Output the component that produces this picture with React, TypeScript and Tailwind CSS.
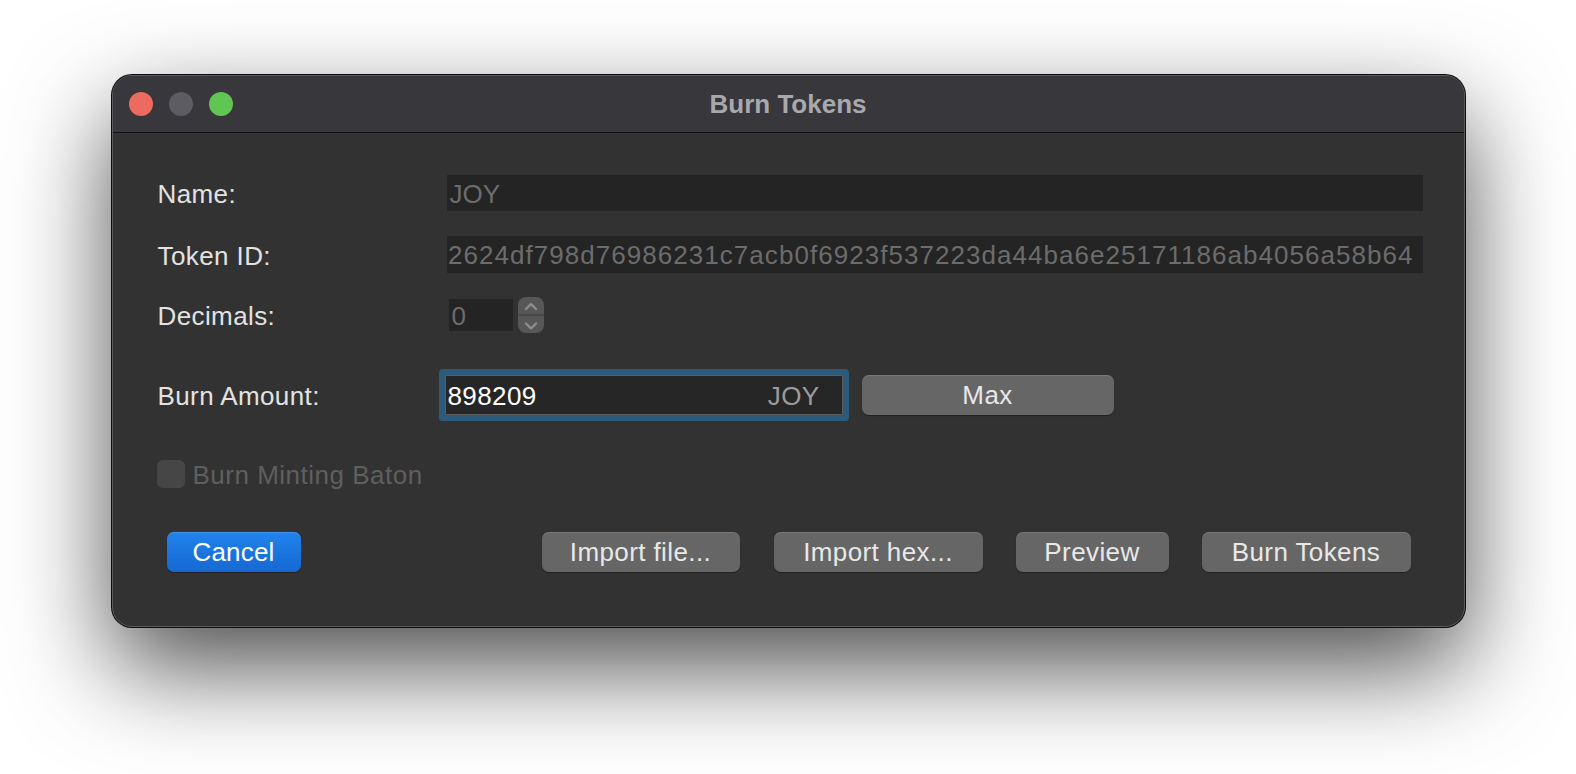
import React from "react";

const font = { fontFamily: '"Liberation Sans", Arial, sans-serif' };

function TrafficLights() {
  return (
    <div className="flex items-center gap-[16px] pl-[16px]">
      <span className="block w-[24px] h-[24px] rounded-full bg-[#ec6a5f]" />
      <span className="block w-[24px] h-[24px] rounded-full bg-[#5d5c62]" />
      <span className="block w-[24px] h-[24px] rounded-full bg-[#61c554]" />
    </div>
  );
}

function Stepper() {
  return (
    <div className="w-[26px] h-[36px] rounded-[8px] bg-[#575757] ml-[5px]">
      <svg width="26" height="36" viewBox="0 0 26 36" fill="none">
        <line x1="0" y1="18" x2="26" y2="18" stroke="#3e3e3e" strokeWidth="1" />
        <polyline points="8,12 13,7 18,12" stroke="#8e8e8e" strokeWidth="2.4" strokeLinecap="round" strokeLinejoin="round" />
        <polyline points="8,26.5 13,31.5 18,26.5" stroke="#8e8e8e" strokeWidth="2.4" strokeLinecap="round" strokeLinejoin="round" />
      </svg>
    </div>
  );
}

function Button({ label, width, className = "" }: { label: string; width: string; className?: string }) {
  return (
    <button
      className={`${width} h-[40px] rounded-[7px] bg-[#666666] text-[#e8e8e8] text-[26px] tracking-[0.4px] leading-none flex items-center justify-center shadow-[inset_0_1px_0_rgba(255,255,255,0.12),0_1px_1px_rgba(0,0,0,0.35)] ${className}`}
    >
      {label}
    </button>
  );
}

function Label({ children }: { children: React.ReactNode }) {
  return <div className="w-[289px] shrink-0 pt-[3px] tracking-[0.4px]">{children}</div>;
}

export default function App() {
  return (
    <div className="w-[1576px] h-[774px] bg-white flex justify-center pt-[75px] overflow-hidden" style={font}>
      <div className="w-[1353px] h-[552px] rounded-[20px] bg-[#323232] border border-[#5b5b5b] shadow-[0_0_0_1px_#0c0c0c,0_40px_100px_rgba(0,0,0,0.7)] overflow-hidden flex flex-col">
        {/* title bar */}
        <div className="h-[57px] shrink-0 bg-[#38373c] border-b border-[#121212] grid grid-cols-[1fr_auto_1fr] items-center">
          <TrafficLights />
          <div className="text-[26px] font-bold text-[#a9a8ad] leading-none">Burn Tokens</div>
          <div />
        </div>

        {/* form */}
        <div className="flex flex-col pl-[45px] pr-[41px] pt-[42px] text-[26px] text-[#e2e2e2]">
          <div className="flex items-center h-[36px]">
            <Label>Name:</Label>
            <div className="flex-1 h-full bg-[#242424] text-[#6c6c6c] flex items-center pl-[3px] pt-[2px]">JOY</div>
          </div>

          <div className="flex items-center h-[37px] mt-[25px]">
            <Label>Token ID:</Label>
            <div className="flex-1 min-w-0 h-full bg-[#242424] text-[#6c6c6c] flex items-center justify-end overflow-hidden pr-[9px] pt-[2px]">
              <span className="whitespace-nowrap tracking-[1.04px]">
                2624df798d76986231c7acb0f6923f537223da44ba6e25171186ab4056a58b64
              </span>
            </div>
          </div>

          <div className="flex items-center h-[36px] mt-[24px]">
            <Label>Decimals:</Label>
            <div className="ml-[2px] w-[64px] h-[32px] bg-[#242424] text-[#6c6c6c] flex items-center pl-[3px] pt-[2px]">0</div>
            <Stepper />
          </div>

          <div className="flex items-center h-[40px] mt-[42px]">
            <Label>Burn Amount:</Label>
            <div className="-ml-[2px] w-[398px] h-[40px] bg-[#262626] border border-[#5c5c5c] rounded-[1px] shadow-[0_0_0_6px_#2c5a7a] flex items-center justify-between pl-[2px] pr-[22px] pt-[2px]">
              <span className="text-white tracking-[0.4px]">898209</span>
              <span className="text-[#9c9c9c] tracking-[0.4px]">JOY</span>
            </div>
            <Button label="Max" width="w-[252px]" className="ml-[19px]" />
          </div>

          <div className="flex items-center h-[28px] mt-[45px]">
            <div className="-ml-[1px] w-[28px] h-[28px] rounded-[6px] bg-[#464646]" />
            <span className="ml-[8px] pt-[2px] text-[#5f5f5f] tracking-[0.5px]">Burn Minting Baton</span>
          </div>

          <div className="flex items-center h-[40px] mt-[44px]">
            <button className="ml-[9px] w-[134px] h-[40px] rounded-[7px] bg-linear-to-b from-[#2183ec] to-[#1668d2] text-white text-[26px] tracking-[0.2px] leading-none flex items-center justify-center shadow-[inset_0_1px_0_rgba(255,255,255,0.15),0_1px_1px_rgba(0,0,0,0.35)]">
              Cancel
            </button>
            <Button label="Import file..." width="w-[198px]" className="ml-[241px]" />
            <Button label="Import hex..." width="w-[209px]" className="ml-[34px]" />
            <Button label="Preview" width="w-[153px]" className="ml-[33px]" />
            <Button label="Burn Tokens" width="w-[209px]" className="ml-[33px]" />
          </div>
        </div>
      </div>
    </div>
  );
}
